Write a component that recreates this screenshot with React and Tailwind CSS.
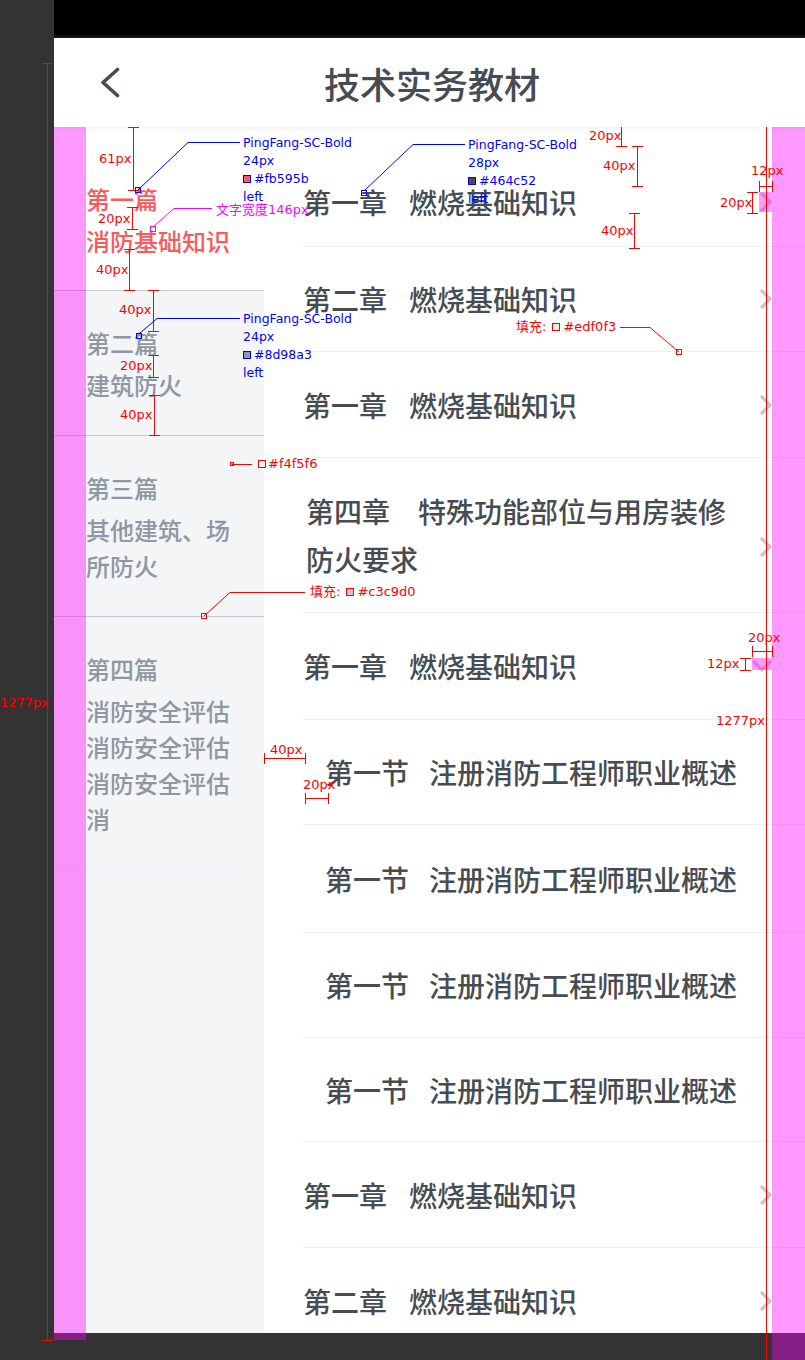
import React from 'react';

const cjk = "font-['Noto_Sans_CJK_SC','Noto_Sans',sans-serif]";
const note = "font-['DejaVu_Sans','Noto_Sans_CJK_SC',sans-serif]";

const sideItems = [
  { title: '第一篇', body: '消防基础知识', active: true, box: 'pt-[60px] pb-[31px] bg-white border-b border-[#c3c9d0]' },
  { title: '第二篇', body: '建筑防火', box: 'pt-[40px] pb-[32px] border-b border-[#c3c9d0]' },
  { title: '第三篇', body: '其他建筑、场所防火', box: 'pt-[40px] pb-[32px] border-b border-[#c3c9d0]' },
  { title: '第四篇', body: '消防安全评估消防安全评估消防安全评估消', box: 'pt-[40px] pb-[31px]' },
];

const rows = [
  { box: 'h-[120px] pt-[30px]', a: '第一章', b: '燃烧基础知识' },
  { box: 'h-[105px]', a: '第二章', b: '燃烧基础知识' },
  { box: 'h-[106px]', a: '第一章', b: '燃烧基础知识' },
  { box: 'h-[155px]', wrap: true },
  { box: 'h-[107px]', a: '第一章', b: '燃烧基础知识', down: true },
  { box: 'h-[105px]', a: '第一节', b: '注册消防工程师职业概述', sub: true },
  { box: 'h-[108px]', a: '第一节', b: '注册消防工程师职业概述', sub: true },
  { box: 'h-[105px]', a: '第一节', b: '注册消防工程师职业概述', sub: true },
  { box: 'h-[104px]', a: '第一节', b: '注册消防工程师职业概述', sub: true },
  { box: 'h-[106px]', a: '第一章', b: '燃烧基础知识' },
  { box: 'h-[106px]', a: '第二章', b: '燃烧基础知识' },
];

function ChevronRight({ className = '' }) {
  return (
    <svg width="12" height="20" viewBox="0 0 12 20" className={className}>
      <polyline points="2,2 10,10 2,18" fill="none" stroke="#c3c9d0" strokeWidth="3.2" strokeLinecap="round" strokeLinejoin="round" />
    </svg>
  );
}

function ChevronDown() {
  return (
    <svg width="20" height="12" viewBox="0 0 20 12">
      <polyline points="2,2 10,10 18,2" fill="none" stroke="#c3c9d0" strokeWidth="3.2" strokeLinecap="round" strokeLinejoin="round" />
    </svg>
  );
}

function Row({ r }) {
  let icon = <ChevronRight className={r.wrap ? 'mt-[23px]' : ''} />;
  if (r.down) icon = <ChevronDown />;
  if (r.sub) icon = null;
  return (
    <div className={`${r.box} flex items-center justify-between pr-[33px] border-b border-[#edf0f3]`}>
      {r.wrap ? (
        <div className="w-[434px] pl-[3px] text-[28px] leading-[48px] text-[#464c52] font-medium">
          第四章<span className="inline-block w-[28px]" />特殊功能部位与用房装修防火要求
        </div>
      ) : (
        <div className={`flex text-[28px] leading-[28px] text-[#464c52] font-medium ${r.sub ? 'pl-[22px] gap-[20px]' : 'gap-[22px]'}`}>
          <span>{r.a}</span>
          <span>{r.b}</span>
        </div>
      )}
      {icon}
    </div>
  );
}

const redLabels = [
  { c: 'left-[55px] top-[37px]', t: '32px' },
  { c: 'left-[140px] top-[93px]', t: '210px' },
  { c: 'left-[99px] top-[152px]', t: '61px' },
  { c: 'left-[98px] top-[212px]', t: '20px' },
  { c: 'left-[96px] top-[263px]', t: '40px' },
  { c: 'left-[119px] top-[303px]', t: '40px' },
  { c: 'left-[120px] top-[359px]', t: '20px' },
  { c: 'left-[120px] top-[408px]', t: '40px' },
  { c: 'left-[589px] top-[129px]', t: '20px' },
  { c: 'left-[603px] top-[159px]', t: '40px' },
  { c: 'left-[601px] top-[224px]', t: '40px' },
  { c: 'left-[751px] top-[164px]', t: '12px' },
  { c: 'left-[720px] top-[196px]', t: '20px' },
  { c: 'left-[773px] top-[55px]', t: '32px' },
  { c: 'left-[748px] top-[631px]', t: '20px' },
  { c: 'left-[707px] top-[657px]', t: '12px' },
  { c: 'left-[716px] top-[714px]', t: '1277px' },
  { c: 'left-[0px] top-[696px]', t: '1277px' },
  { c: 'left-[270px] top-[743px]', t: '40px' },
  { c: 'left-[303px] top-[778px]', t: '20px' },
];

const blueBlocks = [
  { c: 'left-[243px] top-[134px]', size: '24px', sw: 'bg-[#fb595b]', hex: '#fb595b' },
  { c: 'left-[243px] top-[310px]', size: '24px', sw: 'bg-[#8d98a3]', hex: '#8d98a3' },
  { c: 'left-[468px] top-[136px]', size: '28px', sw: 'bg-[#464c52]', hex: '#464c52' },
];

function hm(x1, x2, y, k) {
  return (
    <g key={k}>
      <line x1={x1} y1={y + 0.5} x2={x2} y2={y + 0.5} />
      <line x1={x1 + 0.5} y1={y - 5} x2={x1 + 0.5} y2={y + 6} />
      <line x1={x2 + 0.5} y1={y - 5} x2={x2 + 0.5} y2={y + 6} />
    </g>
  );
}

function vm(x, y1, y2, k) {
  return (
    <g key={k}>
      <line x1={x + 0.5} y1={y1} x2={x + 0.5} y2={y2} />
      <line x1={x - 5} y1={y1 + 0.5} x2={x + 6} y2={y1 + 0.5} />
      <line x1={x - 5} y1={y2 + 0.5} x2={x + 6} y2={y2 + 0.5} />
    </g>
  );
}

function Annotations() {
  return (
    <div className="absolute inset-0 pointer-events-none">
      <div className="absolute left-[54px] top-[63px] w-[32px] h-[1277px] bg-[#ff00ff]/40" />
      <div className="absolute left-[772px] top-[82px] w-[33px] h-[1278px] bg-[#ff00ff]/40" />
      <div className="absolute left-[759px] top-[192px] w-[13px] h-[20px] bg-[#ff00ff]/40" />
      <div className="absolute left-[752px] top-[658px] w-[20px] h-[12px] bg-[#ff00ff]/40" />

      <svg width="805" height="1360" className="absolute left-0 top-0" shapeRendering="crispEdges">
        <g stroke="#ff0000" strokeWidth="1" fill="none">
          {hm(54, 86, 57, 'a')}
          {hm(54, 265, 108, 'b')}
          {vm(133, 127, 190, 'c')}
          {vm(132, 207, 229, 'd')}
          {vm(129, 249, 290, 'e')}
          {vm(153, 290, 331, 'f')}
          {vm(153, 355, 377, 'g')}
          {vm(154, 395, 435, 'h')}
          {vm(621, 126, 146, 'i')}
          {vm(637, 146, 186, 'j')}
          {vm(634, 213, 248, 'k')}
          {hm(759, 772, 186, 'l')}
          {vm(752, 192, 213, 'm')}
          {hm(752, 772, 651, 'n')}
          {vm(745, 658, 670, 'o')}
          {hm(772, 805, 74, 'p')}
          {hm(264, 305, 758, 'q')}
          {hm(305, 328, 798, 'r')}
          {vm(47, 63, 1340, 's')}
          {vm(766, 82, 1360, 't')}
          <line x1="232" y1="464.5" x2="252" y2="464.5" />
          <rect x="230.5" y="462.5" width="3" height="3" />
          <polyline points="204,616 230,592.5 305,592.5" shapeRendering="auto" />
          <rect x="201.5" y="613.5" width="5" height="5" />
          <polyline points="620,327.5 650,327.5 679,352" shapeRendering="auto" />
          <rect x="676.5" y="349.5" width="5" height="5" />
        </g>
        <g stroke="#0000ff" strokeWidth="1" fill="none">
          <polyline points="138,190 188,142.5 240,142.5" shapeRendering="auto" />
          <rect x="135.5" y="187.5" width="5" height="5" />
          <polyline points="139,334 157,318.5 240,318.5" shapeRendering="auto" />
          <rect x="136.5" y="333.5" width="5" height="5" />
          <polyline points="364,191 413,144.5 465,144.5" shapeRendering="auto" />
          <rect x="361.5" y="190.5" width="5" height="5" />
        </g>
        <g stroke="#ff00ff" strokeWidth="1" fill="none">
          <polyline points="153,227 174,208.5 212,208.5" shapeRendering="auto" />
          <rect x="150.5" y="226.5" width="5" height="5" />
        </g>
      </svg>

      <div className={`${note} text-[13px] leading-[14px] text-[#ff0000]`}>
        {redLabels.map((l, i) => (
          <div key={i} className={`absolute ${l.c} whitespace-nowrap`}>{l.t}</div>
        ))}
        <div className="absolute left-[258px] top-[457px] flex items-center whitespace-nowrap">
          <span className="inline-block w-[8px] h-[8px] border border-[#ff0000] bg-[#f4f5f6] mr-[2px]" />#f4f5f6
        </div>
        <div className="absolute left-[310px] top-[585px] flex items-center whitespace-nowrap">
          填充:<span className="inline-block w-[8px] h-[8px] border border-[#ff0000] bg-[#c3c9d0] ml-[6px] mr-[3px]" />#c3c9d0
        </div>
        <div className="absolute left-[516px] top-[320px] flex items-center whitespace-nowrap">
          填充:<span className="inline-block w-[8px] h-[8px] border border-[#ff0000] bg-[#edf0f3] ml-[6px] mr-[3px]" />#edf0f3
        </div>
      </div>

      <div className={`${note} text-[12.5px] leading-[18px] text-[#0000ff]`}>
        {blueBlocks.map((b, i) => (
          <div key={i} className={`absolute ${b.c} whitespace-nowrap`}>
            <div>PingFang-SC-Bold</div>
            <div>{b.size}</div>
            <div className="flex items-center">
              <span className={`inline-block w-[8px] h-[8px] border border-[#0000ff] ${b.sw} mr-[3px]`} />
              {b.hex}
            </div>
            <div>left</div>
          </div>
        ))}
      </div>

      <div className={`${note} absolute left-[216px] top-[203px] text-[13px] leading-[14px] text-[#ff00ff] whitespace-nowrap`}>
        文字宽度146px
      </div>
    </div>
  );
}

export default function App() {
  return (
    <div className={`relative w-[805px] h-[1360px] bg-[#333333] overflow-hidden ${cjk}`}>
      <div className="flex">
        <div className="w-[54px] shrink-0" />
        <div className="w-[751px] h-[1333px] flex flex-col overflow-hidden">
          <div className="h-[38px] shrink-0 bg-linear-to-b from-black from-80% to-[#1e1e1e]" />
          <div className="relative z-10 h-[89px] shrink-0 bg-white flex items-center shadow-[0_3px_5px_rgba(0,0,0,0.04)]">
            <div className="w-[66px] pl-[46px] flex items-center">
              <svg width="20" height="31" viewBox="0 0 20 31">
                <polyline points="17.5,2.5 3,15.5 17.5,28.5" fill="none" stroke="#464c52" strokeWidth="3.6" strokeLinecap="round" strokeLinejoin="round" />
              </svg>
            </div>
            <div className="flex-1 text-center text-[36px] leading-[40px] font-medium text-[#464c52]">技术实务教材</div>
            <div className="w-[61px]" />
          </div>
          <div className="flex flex-1 min-h-0">
            <div className="w-[210px] shrink-0 bg-[#f4f5f6]">
              {sideItems.map((s) => (
                <div key={s.title} className={`${s.box} pl-[32px]`}>
                  <div className={`text-[24px] leading-[24px] font-medium ${s.active ? 'text-[#fb595b]' : 'text-[#8d98a3]'}`}>{s.title}</div>
                  <div className={`mt-[12px] w-[146px] text-[24px] leading-[36px] font-medium ${s.active ? 'text-[#fb595b]' : 'text-[#8d98a3]'}`}>{s.body}</div>
                </div>
              ))}
              <div className="h-px mr-[10px] bg-[#edf0f3]" />
            </div>
            <div className="flex-1 bg-white pl-[39px]">
              {rows.map((r, i) => (
                <Row key={i} r={r} />
              ))}
            </div>
          </div>
        </div>
      </div>
      <Annotations />
    </div>
  );
}
